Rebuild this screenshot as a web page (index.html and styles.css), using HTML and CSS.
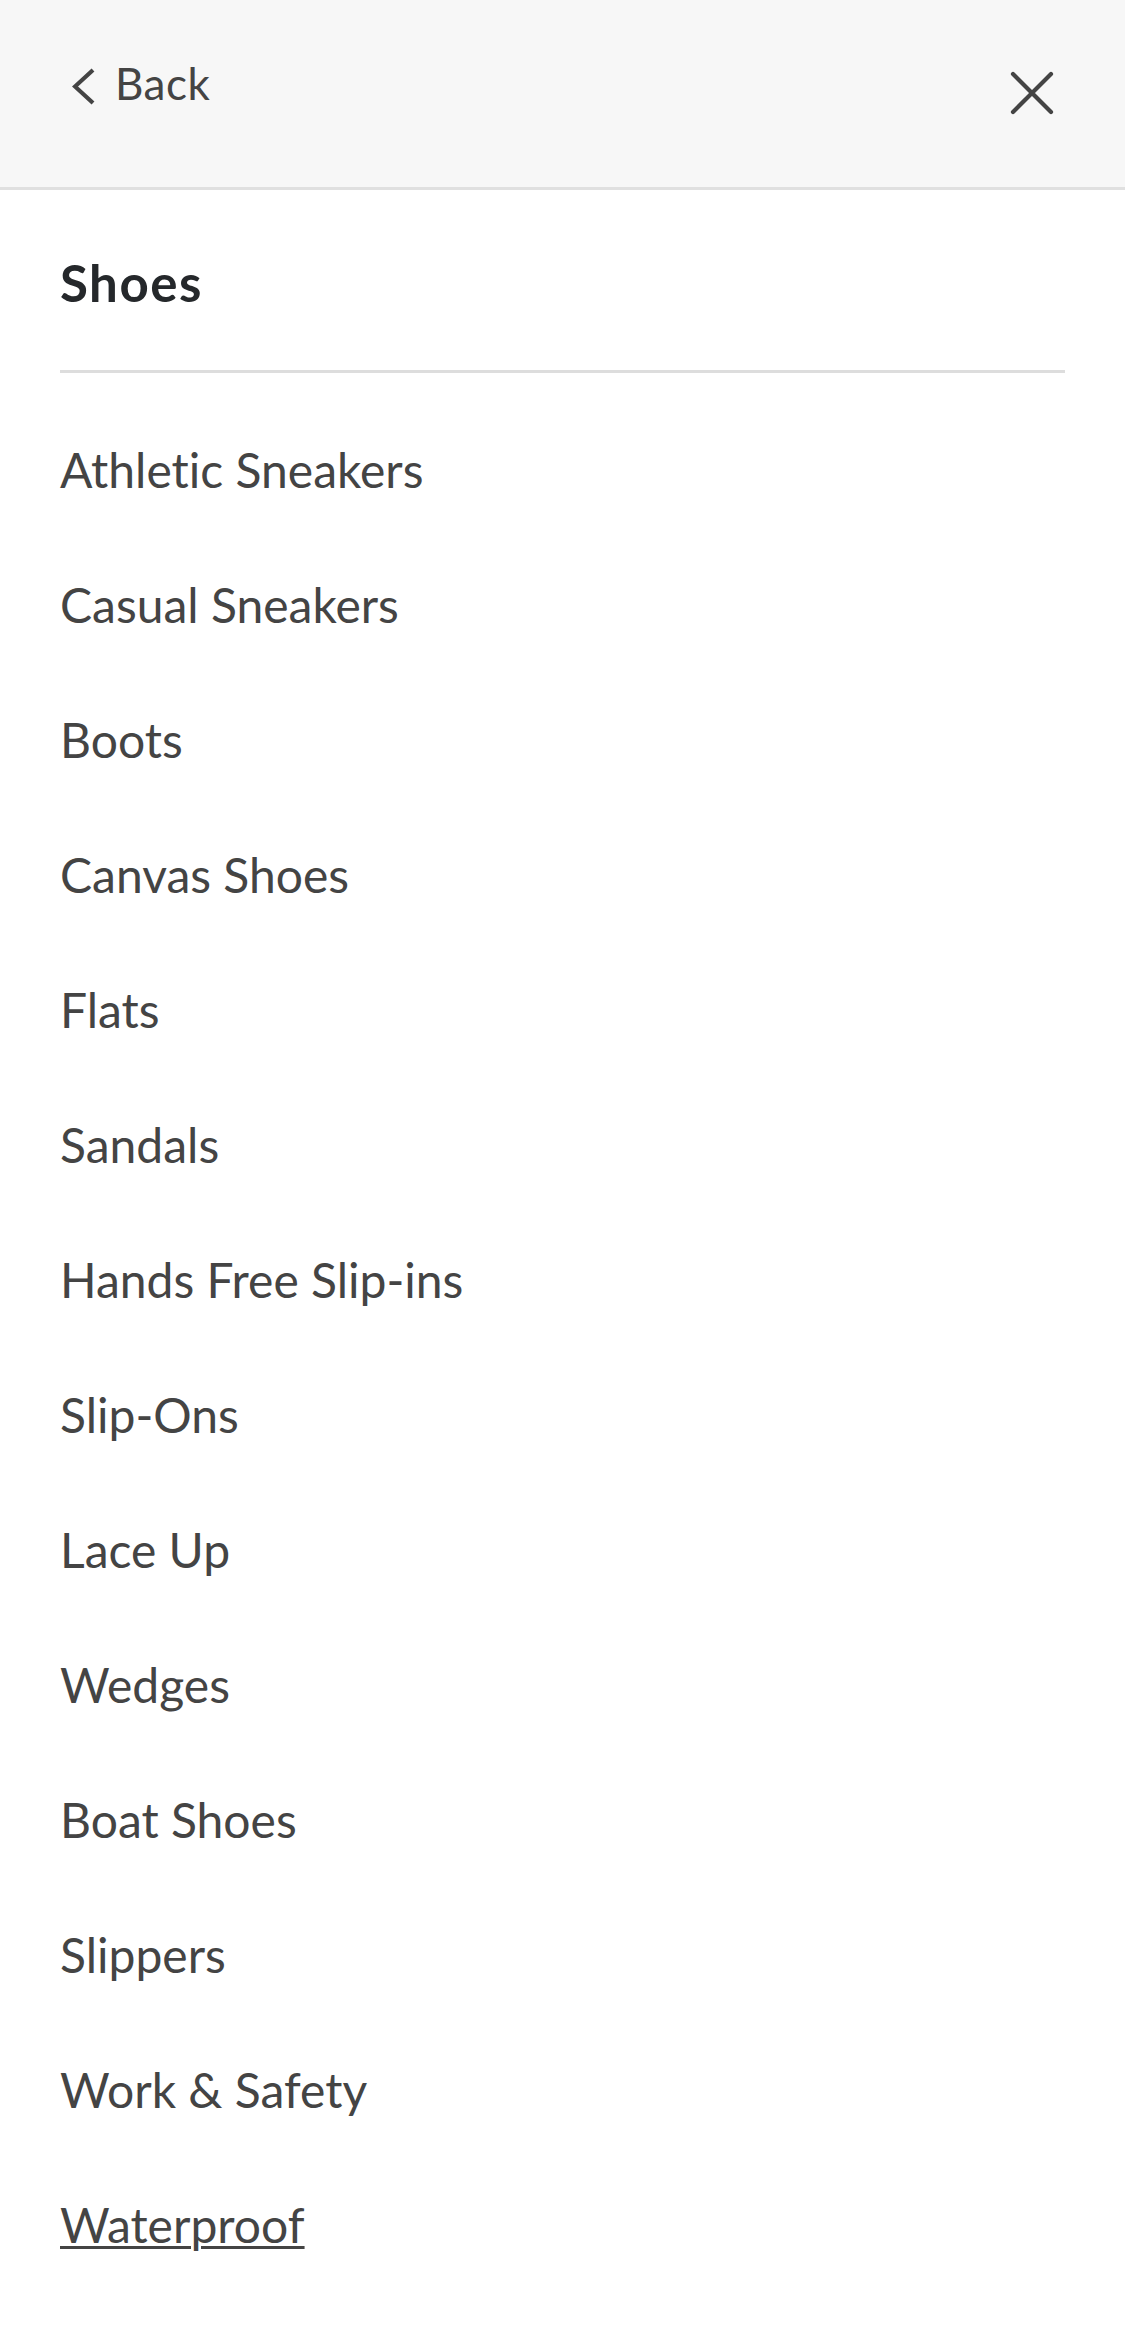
FILE: index.html
```html
<!DOCTYPE html>
<html lang="en">
<head>
<meta charset="utf-8">
<title>Shoes menu</title>
<link rel="stylesheet" href="styles.css">
</head>
<body>
<header class="topbar">
  <a class="back" href="#">
    <svg class="back-icon" viewBox="0 0 24 44" width="24" height="44" aria-hidden="true">
      <path d="M21 9 L3 25.5 L21 42" fill="none" stroke="#444" stroke-width="4.2" stroke-linejoin="miter"/>
    </svg>
    <span class="back-label">Back</span>
  </a>
  <button class="close" aria-label="Close">
    <svg viewBox="0 0 48 48" width="48" height="48" aria-hidden="true">
      <path d="M5 5 L43 43 M43 5 L5 43" fill="none" stroke="#444" stroke-width="4.2" stroke-linecap="round"/>
    </svg>
  </button>
</header>
<main class="panel">
  <h1 class="title">Shoes</h1>
  <ul class="menu">
    <li class="menu-item"><a href="#">Athletic Sneakers</a></li>
    <li class="menu-item"><a href="#">Casual Sneakers</a></li>
    <li class="menu-item"><a href="#">Boots</a></li>
    <li class="menu-item"><a href="#">Canvas Shoes</a></li>
    <li class="menu-item"><a href="#">Flats</a></li>
    <li class="menu-item"><a href="#">Sandals</a></li>
    <li class="menu-item"><a href="#">Hands Free Slip-ins</a></li>
    <li class="menu-item"><a href="#">Slip-Ons</a></li>
    <li class="menu-item"><a href="#">Lace Up</a></li>
    <li class="menu-item"><a href="#">Wedges</a></li>
    <li class="menu-item"><a href="#">Boat Shoes</a></li>
    <li class="menu-item"><a href="#">Slippers</a></li>
    <li class="menu-item"><a href="#">Work &amp; Safety</a></li>
    <li class="menu-item"><a class="active" href="#">Waterproof</a></li>
  </ul>
</main>
</body>
</html>
```
FILE: styles.css
```css
* { box-sizing: border-box; }
html, body {
  margin: 0;
  padding: 0;
  background: #ffffff;
  font-family: Lato, "Open Sans", "Liberation Sans", sans-serif;
  font-variant-ligatures: none;
  color: #444444;
}
a { color: inherit; text-decoration: none; }

.topbar {
  height: 190px;
  background: #f7f7f7;
  border-bottom: 3px solid #e0e0e0;
  display: flex;
  justify-content: space-between;
  align-items: flex-start;
  padding: 61px 69px 0 72px;
}
.back {
  display: flex;
  align-items: center;
  gap: 19px;
}
.back-icon { display: block; }
.back-label {
  font-size: 44px;
  line-height: 44px;
  letter-spacing: 0.5px;
  color: #444444;
}
.close {
  margin-top: 8px;
  padding: 0;
  border: 0;
  background: transparent;
  display: block;
}
.close svg { display: block; }

.panel {
  padding: 0 60px;
}
.title {
  margin: 0;
  padding: 67px 0 62px;
  font-size: 51px;
  line-height: 51px;
  font-weight: 700;
  letter-spacing: 1.5px;
  color: #25282b;
  border-bottom: 3px solid #dddddd;
}
.menu {
  list-style: none;
  margin: 0;
  padding: 29px 0 0;
}
.menu-item {
  font-size: 48px;
  line-height: 135px;
  height: 135px;
  color: #444444;
}
.menu-item .active {
  text-decoration: underline;
  text-decoration-thickness: 3px;
  text-underline-offset: 3px;
}
```
